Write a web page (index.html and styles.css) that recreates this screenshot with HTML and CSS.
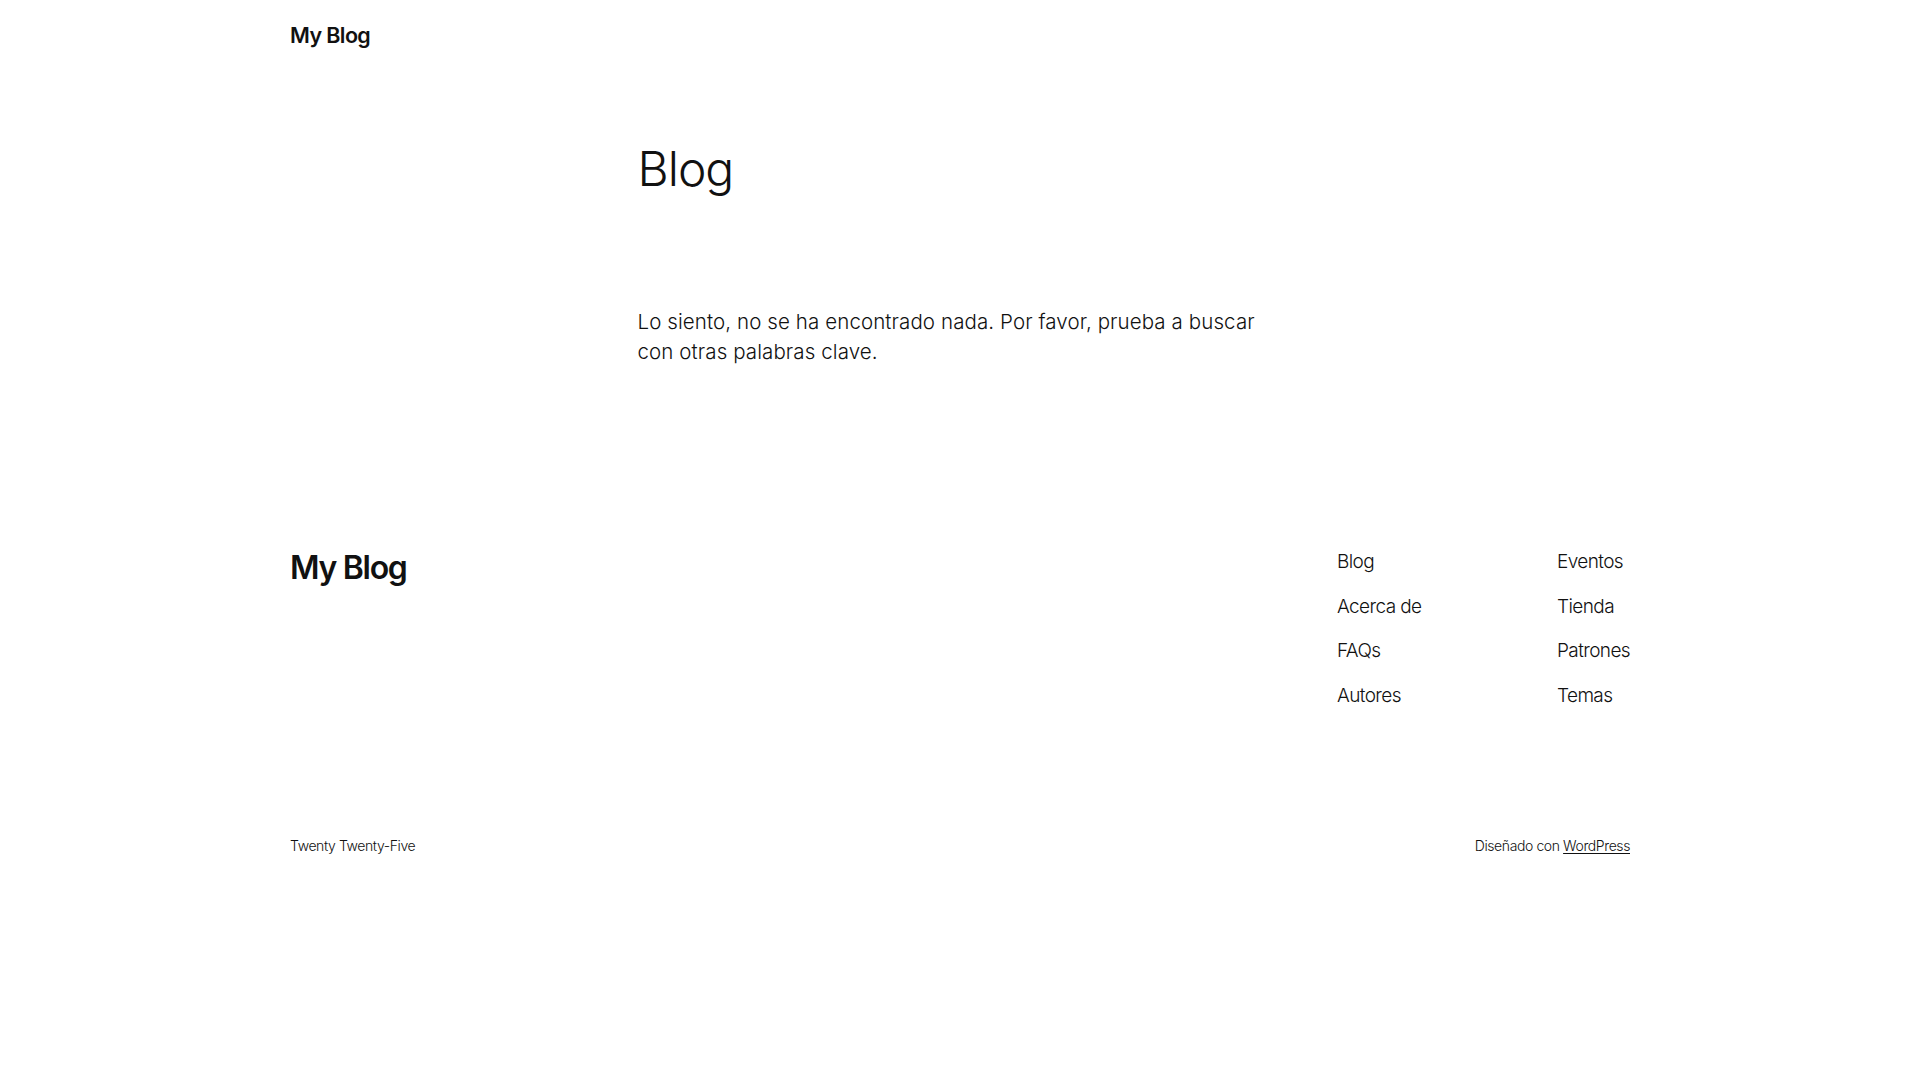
FILE: index.html
```html
<!DOCTYPE html>
<html lang="es">
<head>
<meta charset="utf-8">
<title>Blog – My Blog</title>
<link rel="stylesheet" href="styles.css">
</head>
<body>
<header class="site-header">
  <div class="wide">
    <a class="site-title" href="#">My Blog</a>
  </div>
</header>
<main class="site-main">
  <div class="content">
    <h1 class="page-title">Blog</h1>
    <p class="no-results">Lo siento, no se ha encontrado nada. Por favor, prueba a buscar con otras palabras clave.</p>
  </div>
</main>
<footer class="site-footer">
  <div class="wide footer-top">
    <a class="footer-title" href="#">My Blog</a>
    <nav class="footer-nav">
      <ul class="nav-col">
        <li><a href="#">Blog</a></li>
        <li><a href="#">Acerca de</a></li>
        <li><a href="#">FAQs</a></li>
        <li><a href="#">Autores</a></li>
      </ul>
      <ul class="nav-col">
        <li><a href="#">Eventos</a></li>
        <li><a href="#">Tienda</a></li>
        <li><a href="#">Patrones</a></li>
        <li><a href="#">Temas</a></li>
      </ul>
    </nav>
  </div>
  <div class="wide footer-bottom">
    <span class="theme-name">Twenty Twenty-Five</span>
    <span class="credit">Diseñado con <a class="credit-link" href="#">WordPress</a></span>
  </div>
</footer>
</body>
</html>
```

FILE: styles.css
```css
* { box-sizing: border-box; }

html, body {
  margin: 0;
  padding: 0;
  background: #ffffff;
}

body {
  font-family: Inter, "Noto Sans", "DejaVu Sans", sans-serif;
  color: #111111;
  font-size: 20px;
  line-height: 1.5;
}

a { color: inherit; text-decoration: none; }

.wide {
  width: 1340px;
  margin: 0 auto;
}

/* Header */
.site-header {
  padding: 21px 0 21px;
}
.site-title {
  display: inline-block;
  font-size: 21.5px;
  line-height: 28.6px;
  font-weight: 600;
  letter-spacing: -0.6px;
}

/* Main */
.site-main {
  padding-top: 69px;
}
.content {
  width: 645px;
  margin: 0 auto;
}
.page-title {
  margin: 0;
  font-size: 48px;
  line-height: 56px;
  font-weight: 300;
  letter-spacing: -1px;
}
.no-results {
  margin: 110px 0 0;
  font-size: 20.5px;
  line-height: 30px;
  font-weight: 300;
  letter-spacing: 0.1px;
}

/* Footer */
.site-footer {
  padding-top: 180px;
}
.footer-top {
  display: flex;
  justify-content: space-between;
  align-items: flex-start;
}
.footer-title {
  margin-top: 2px;
  font-size: 32px;
  line-height: 38.4px;
  font-weight: 600;
  letter-spacing: -1.3px;
}
.footer-nav {
  display: grid;
  grid-template-columns: 220px auto;
}
.nav-col {
  list-style: none;
  margin: 0;
  padding: 0;
  display: flex;
  flex-direction: column;
  gap: 14.6px;
}
.nav-col li {
  font-size: 19px;
  line-height: 30px;
  font-weight: 300;
  letter-spacing: -0.6px;
}

.footer-bottom {
  display: flex;
  justify-content: space-between;
  align-items: center;
  margin-top: 124px;
  font-size: 14px;
  line-height: 21px;
  font-weight: 300;
  letter-spacing: -0.4px;
  padding-bottom: 40px;
}
.credit-link {
  text-decoration: underline;
  text-underline-offset: 2px;
  text-decoration-thickness: 1px;
}
```
